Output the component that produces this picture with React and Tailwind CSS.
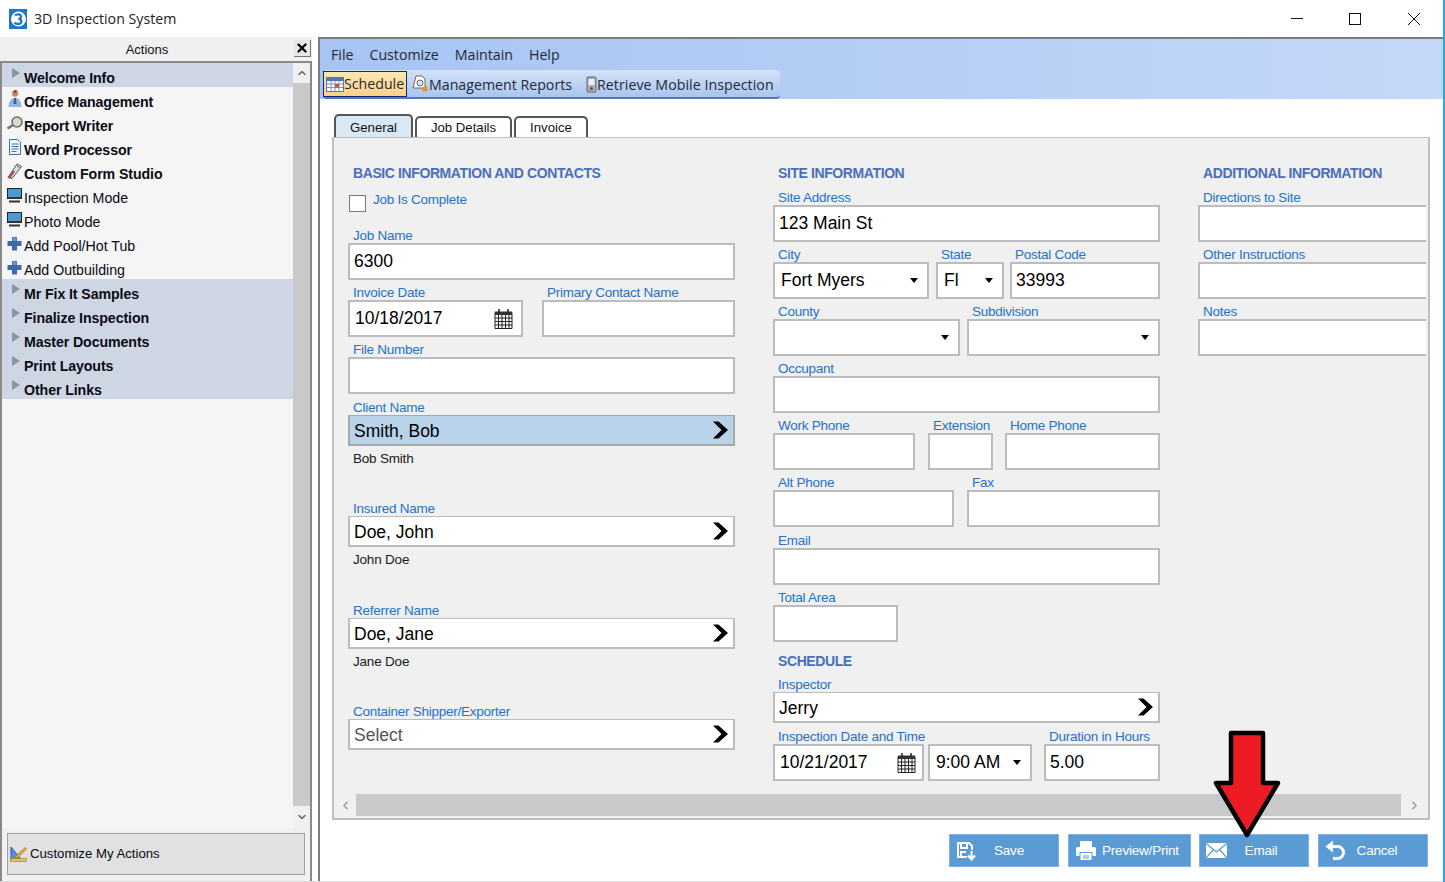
import { X, ChevronUp, ChevronDown, ChevronLeft, ChevronRight } from "lucide-react";

const sans = "font-['Liberation_Sans',Arial,sans-serif]";

function Tri() {
  return (
    <svg width="10" height="12" viewBox="0 0 10 12" className="mb-1">
      <path d="M1 1 L9 6 L1 11 Z" fill="#8a92a8" />
    </svg>
  );
}

function Person() {
  return (
    <svg width="16" height="20" viewBox="0 0 16 20">
      <circle cx="8" cy="4.5" r="3.2" fill="#c98b5a" />
      <path d="M7 1h3l-1 3H7z" fill="#6b5a4a" />
      <path d="M1.5 18c0-6 3-9 6.5-9s6.5 3 6.500 9z" fill="#8fb8e0" />
      <path d="M7 9h2l.5 6H6.500z" fill="#3f5f8f" />
    </svg>
  );
}

function Lens() {
  return (
    <svg width="18" height="14" viewBox="0 0 18 14">
      <circle cx="11" cy="6" r="5" fill="#d8d8d0" stroke="#6f6f68" strokeWidth="1.6" />
      <path d="M7 9 L1.5 12.5" stroke="#77736a" strokeWidth="2.4" />
    </svg>
  );
}

function Doc() {
  return (
    <svg width="14" height="16" viewBox="0 0 14 16">
      <path d="M1.5 .5h8l3 3v12h-11z" fill="#eef4fc" stroke="#3f6fb5" />
      <path d="M3.5 5h7M3.5 7.5h7M3.5 10h7M3.5 12.5h5" stroke="#3f6fb5" />
    </svg>
  );
}

function Tools() {
  return (
    <svg width="17" height="17" viewBox="0 0 17 17">
      <path d="M11 1 L15.5 3.5 L6 15.5 L2 14.5 Z" fill="#d9dde4" stroke="#555" />
      <path d="M3 15 L8 8" stroke="#b04a50" strokeWidth="2.4" />
      <path d="M11 3 L13.5 4.5" stroke="#555" />
    </svg>
  );
}

function Monitor() {
  return (
    <svg width="15" height="15" viewBox="0 0 15 15">
      <rect x=".5" y=".5" width="14" height="10" fill="#4a9ad8" stroke="#222" />
      <path d="M1 9h13v2H1z" fill="#333" />
      <path d="M2 12.500h11v2H2z" fill="#333" />
    </svg>
  );
}

function Plus() {
  return (
    <svg width="15" height="15" viewBox="0 0 15 15">
      <path d="M5 1h5v4h4.500v5H10v4.500H5V10H.5V5H5z" fill="#3f68ad" />
      <path d="M5.500 1.500h4v3.500H5.500z" fill="#6d93cf" />
    </svg>
  );
}

function Ruler() {
  return (
    <svg width="17" height="16" viewBox="0 0 17 16">
      <path d="M1 1 L1 13 L11 13 Z" fill="#5a8fdc" stroke="#2f5fae" />
      <path d="M6 10 L15 1.500 L16.500 3 L8 11.500 L5 12.500 Z" fill="#e8a63a" stroke="#96641c" strokeWidth=".6" />
      <rect x="0.500" y="12.500" width="16" height="3" fill="#e6c560" stroke="#97782a" strokeWidth=".6" />
    </svg>
  );
}

function Logo() {
  return (
    <svg width="18" height="20" viewBox="0 0 18 20">
      <rect width="18" height="20" fill="#1f78c4" />
      <circle cx="9.500" cy="10" r="7.500" fill="#fff" />
      <path d="M6 6.500c1-1.500 6-1.800 6 1.200 0 1.400-1.300 2-2.600 2.200 1.600.1 3 .9 3 2.500 0 3-5.200 3-7 1.200" fill="none" stroke="#1f78c4" strokeWidth="2.200" />
    </svg>
  );
}

function ScheduleIcon() {
  return (
    <svg width="18" height="15" viewBox="0 0 18 15" className="shrink-0">
      <rect x=".5" y=".5" width="17" height="14" fill="#fff" stroke="#5574b8" />
      <rect x="1" y="1" width="16" height="3" fill="#5574b8" />
      <path d="M1 7h16M1 10.500h16M5 4v10M9 4v10M13 4v10" stroke="#7f95c8" />
      <rect x="9" y="7" width="4" height="3.500" fill="#d9483b" />
    </svg>
  );
}

function ReportIcon() {
  return (
    <svg width="17" height="18" viewBox="0 0 17 18" className="shrink-0">
      <path d="M4 1h6l3 3v9H1z" fill="#fff" stroke="#666" />
      <circle cx="8" cy="8" r="3" fill="#dfe4ea" stroke="#666" />
      <circle cx="13" cy="14" r="2.800" fill="#e0913a" />
    </svg>
  );
}

function MobileIcon() {
  return (
    <svg width="11" height="17" viewBox="0 0 11 17" className="shrink-0">
      <rect x="1" y="1" width="9" height="15" rx="1" fill="#a9adb3" stroke="#666" />
      <rect x="2.500" y="3" width="6" height="6" fill="#e9eef5" />
      <circle cx="5.500" cy="12.500" r="1.500" fill="#555" />
    </svg>
  );
}

function CalendarIcon() {
  return (
    <svg width="19" height="20" viewBox="0 0 19 20">
      <path d="M1 3.500h17v16H1z" fill="#fff" stroke="#222" />
      <path d="M1 2.500h17v3.500H1z" fill="#333" />
      <path d="M5 0v4M14 0v4" stroke="#222" strokeWidth="1.500" />
      <path d="M1 9h17M1 12.500h17M1 16h17M4.500 6v13M8 6v13M11.500 6v13M15 6v13" stroke="#222" />
    </svg>
  );
}

function MenuChevron() {
  return (
    <svg width="17" height="18" viewBox="0 0 17 18" className="shrink-0">
      <path d="M1 .5h5.500L16 9l-9.500 8.500H1L9.500 9z" fill="#000" />
    </svg>
  );
}

function SaveIcon() {
  return (
    <svg width="21" height="20" viewBox="0 0 21 20" fill="none" stroke="#fff" strokeWidth="2">
      <path d="M11 16H2V2h11l3 3v4" />
      <path d="M5 2v5h6V2M5 16v-5h5" />
      <path d="M15.500 10v8M12 14.500l3.500 4 3.500-4" strokeWidth="2.200" />
    </svg>
  );
}

function PrinterIcon() {
  return (
    <svg width="22" height="21" viewBox="0 0 22 21" fill="#fff">
      <path d="M5 1h12v6H5z" />
      <path d="M1 8.500a1.500 1.500 0 0 1 1.500-1.500h17A1.500 1.500 0 0 1 21 8.500V16h-3.500v-4h-13v4H1z" />
      <path d="M5.500 13h11v7h-11z" />
      <path d="M8 16h6M8 18h6" stroke="#5b9bd5" />
    </svg>
  );
}

function MailIcon() {
  return (
    <svg width="21" height="15" viewBox="0 0 21 15">
      <path d="M0 0h21v15H0z" fill="#fff" />
      <path d="M0 .5 L10.500 9 L21 .5M0 15 L7.500 6.500M21 15 L13.500 6.500" fill="none" stroke="#5b9bd5" strokeWidth="1.300" />
    </svg>
  );
}

function UndoIcon() {
  return (
    <svg width="21" height="21" viewBox="0 0 21 21" fill="none">
      <path d="M6 6.500h6.500a6 6 0 0 1 0 12H8" stroke="#fff" strokeWidth="3" />
      <path d="M0.500 6.500 L8 0.500 V12.500 Z" fill="#fff" />
    </svg>
  );
}

function WinControls() {
  return (
    <div className="ml-auto flex items-center pr-[23px]">
      <svg width="12" height="12" viewBox="0 0 12 12" fill="none" stroke="#111">
        <path d="M0 5.500h12" />
      </svg>
      <svg width="12" height="12" viewBox="0 0 12 12" fill="none" stroke="#111" className="ml-[46px]">
        <rect x=".5" y=".5" width="11" height="11" />
      </svg>
      <svg width="12" height="12" viewBox="0 0 12 12" fill="none" stroke="#111" className="ml-[47px]">
        <path d="M0 0 L12 12 M12 0 L0 12" />
      </svg>
    </div>
  );
}

function RedArrow() {
  return (
    <svg width="70" height="108" viewBox="0 0 70 108" className="absolute left-[1212px] top-[730px]">
      <path d="M19 3 H51 V53 H66 L35 105 L4 53 H19 Z" fill="#ed1c24" stroke="#000" strokeWidth="4.500" strokeLinejoin="round" />
    </svg>
  );
}

const actions = [
  { label: "Welcome Info", bold: true, band: true },
  { label: "Office Management", bold: true, icon: <Person /> },
  { label: "Report Writer", bold: true, icon: <Lens /> },
  { label: "Word Processor", bold: true, icon: <Doc /> },
  { label: "Custom Form Studio", bold: true, icon: <Tools /> },
  { label: "Inspection Mode", icon: <Monitor /> },
  { label: "Photo Mode", icon: <Monitor /> },
  { label: "Add Pool/Hot Tub", icon: <Plus /> },
  { label: "Add Outbuilding", icon: <Plus /> },
  { label: "Mr Fix It Samples", bold: true, band: true },
  { label: "Finalize Inspection", bold: true, band: true },
  { label: "Master Documents", bold: true, band: true },
  { label: "Print Layouts", bold: true, band: true },
  { label: "Other Links", bold: true, band: true },
];

function Sidebar() {
  return (
    <aside className="w-[312px] shrink-0 flex flex-col bg-[#f0f0f0]">
      <div className="h-[24px] shrink-0 flex items-center relative">
        <span className="w-[294px] text-center text-[13px] text-[#111] pt-0.5">Actions</span>
        <button className="absolute right-[1px] top-[3px] w-[17px] h-[17px] bg-[#e8e8e0] border-r border-b border-[#777] flex items-center justify-center">
          <X size={14} strokeWidth={4} color="#000" />
        </button>
      </div>
      <div className="flex-1 flex flex-col border-2 border-[#8a8a8a] border-b-0 bg-[#f5f5f5] min-h-0">
        <div className="flex-1 flex min-h-0">
          <ul className="flex-1">
            {actions.map((a) => (
              <li key={a.label} className={`h-[24px] flex items-center ${a.band ? "bg-[#cfd6e3]" : ""}`}>
                <span className={`w-[22px] shrink-0 flex items-center justify-center ${a.band ? "pl-[5px]" : "pl-[3px]"}`}>
                  {a.band ? <Tri /> : a.icon}
                </span>
                <span className={`pt-[8px] text-[14.2px] text-[#0a0a14] ${a.bold ? "font-bold tracking-[-0.1px]" : ""}`}>{a.label}</span>
              </li>
            ))}
          </ul>
          <div className="w-[17px] shrink-0 flex flex-col bg-[#f0f0f0]">
            <div className="h-[20px] flex items-center justify-center">
              <ChevronUp size={12} strokeWidth={3} color="#666" />
            </div>
            <div className="flex-1 bg-[#c9c9c9]" />
            <div className="h-[22px] flex items-center justify-center">
              <ChevronDown size={12} strokeWidth={3} color="#666" />
            </div>
          </div>
        </div>
        <div className="h-[53px] shrink-0 pt-[5px] px-[5px] bg-[#f0f0f0]">
          <button className="w-[298px] h-[42px] bg-[#e1e1e1] border border-[#a0a0a0] flex items-center pl-[2px] gap-[3px] text-[13.2px] text-[#0a0a14]">
            <Ruler />
            Customize My Actions
          </button>
        </div>
      </div>
    </aside>
  );
}

const labelClass = "h-[20px] pl-[5px] text-[13.5px] leading-[20px] pt-[3px] text-[#2472c8] tracking-[-0.25px] whitespace-nowrap";

function Field({ label, width, value, children }) {
  return (
    <div className={`${width} shrink-0`}>
      <div className={labelClass}>{label}</div>
      <div className="h-[37px] border-2 border-[#bcbcbc] bg-white flex items-center pl-[4px] text-[17.5px] text-black">
        {value}
        {children}
      </div>
    </div>
  );
}

function Combo({ label, width, value }) {
  return (
    <Field label={label} width={width} value={<span className="flex-1 pl-[2px]">{value}</span>}>
      <span className="w-0 h-0 mr-[9px] border-x-[4px] border-x-transparent border-t-[5px] border-t-black" />
    </Field>
  );
}

function Picker({ label, value, sub, active, muted, className = "" }) {
  return (
    <div className={`w-[387px] shrink-0 ${className}`}>
      <div className={labelClass}>{label}</div>
      <div className={`h-[31px] border-2 border-t flex items-center pl-[4px] pr-[4px] text-[17.5px] ${active ? "bg-[#b8d2ea] border-[#a8a8a8]" : "bg-white border-[#bcbcbc]"} ${muted ? "text-[#555]" : "text-black"}`}>
        <span className="flex-1 pt-[3px]">{value}</span>
        <MenuChevron />
      </div>
      {sub !== undefined && <div className="h-[50px] pl-[5px] pt-[3px] text-[13.5px] tracking-[-0.2px] text-[#1a1a1a]">{sub}</div>}
    </div>
  );
}

function Heading({ children, className = "" }) {
  return <h2 className={`text-[14px] h-[20px] shrink-0 leading-[20px] pl-[5px] font-bold text-[#4a6fb8] tracking-[-0.4px] whitespace-nowrap ${className}`}>{children}</h2>;
}

function BasicColumn() {
  return (
    <div className="w-[387px] shrink-0 flex flex-col">
      <Heading>BASIC INFORMATION AND CONTACTS</Heading>
      <div className="h-[40px] shrink-0 flex items-start pt-[12px] pl-px gap-[7px]">
        <span className="w-[17px] h-[17px] border border-[#777] bg-white" />
        <span className="text-[13.5px] text-[#2472c8] tracking-[-0.25px] -mt-[5px]">Job Is Complete</span>
      </div>
      <Field label="Job Name" width="w-[387px]" value="6300" />
      <div className="flex gap-[19px]">
        <Field label="Invoice Date" width="w-[175px]" value={<span className="flex-1 pl-px">10/18/2017</span>}>
          <span className="mr-[8px] flex"><CalendarIcon /></span>
        </Field>
        <Field label="Primary Contact Name" width="w-[193px]" />
      </div>
      <Field label="File Number" width="w-[387px]" />
      <Picker label="Client Name" value="Smith, Bob" sub="Bob Smith" active className="mt-px" />
      <Picker label="Insured Name" value="Doe, John" sub="John Doe" />
      <Picker label="Referrer Name" value="Doe, Jane" sub="Jane Doe" className="mt-px" />
      <Picker label="Container Shipper/Exporter" value="Select" muted />
    </div>
  );
}

function SiteColumn() {
  return (
    <div className="w-[387px] shrink-0 flex flex-col">
      <Heading className="mb-[2px]">SITE INFORMATION</Heading>
      <Field label="Site Address" width="w-[387px]" value="123 Main St" />
      <div className="flex gap-[7px]">
        <Combo label="City" width="w-[156px]" value="Fort Myers" />
        <Combo label="State" width="w-[68px]" value="Fl" />
        <Field label="Postal Code" width="w-[150px] -ml-px" value="33993" />
      </div>
      <div className="flex gap-[7px]">
        <Combo label="County" width="w-[187px]" value="" />
        <Combo label="Subdivision" width="w-[193px]" value="" />
      </div>
      <Field label="Occupant" width="w-[387px]" />
      <div className="flex gap-[13px]">
        <Field label="Work Phone" width="w-[142px]" />
        <Field label="Extension" width="w-[65px]" />
        <Field label="Home Phone" width="w-[155px] -ml-px" />
      </div>
      <div className="flex gap-[13px]">
        <Field label="Alt Phone" width="w-[181px]" />
        <Field label="Fax" width="w-[193px]" />
      </div>
      <Field label="Email" width="w-[387px] mt-px" />
      <Field label="Total Area" width="w-[125px]" />
      <Heading className="mt-[9px] mb-px">SCHEDULE</Heading>
      <Picker label="Inspector" value="Jerry" />
      <div className="flex mt-px">
        <Field label="Inspection Date and Time" width="w-[151px]" value={<span className="flex-1 pl-px">10/21/2017</span>}>
          <span className="mr-[6px] flex"><CalendarIcon /></span>
        </Field>
        <div className="w-[4px]" />
        <Combo label="" width="w-[104px]" value="9:00 AM" />
        <div className="w-[12px]" />
        <Field label="Duration in Hours" width="w-[116px]" value="5.00" />
      </div>
    </div>
  );
}

function ExtraColumn() {
  return (
    <div className="w-[240px] shrink-0 flex flex-col">
      <Heading className="mb-[2px]">ADDITIONAL INFORMATION</Heading>
      <Field label="Directions to Site" width="w-[240px]" />
      <Field label="Other Instructions" width="w-[240px]" />
      <Field label="Notes" width="w-[240px]" />
    </div>
  );
}

function Tab({ label, active, width }) {
  return (
    <div className={`${width} rounded-t-[5px] border-2 border-b-0 text-center text-[13.2px] border-[#555] text-[#111] ${active ? "h-[23px] bg-[#d9e8f5] leading-[23px]" : "h-[21px] bg-white leading-[20px]"}`}>
      {label}
    </div>
  );
}

function ActionButton({ label, icon, width, textClass }) {
  return (
    <button className={`${width} h-[33px] bg-[#5b9bd5] border border-[#7fb2e0] flex items-center text-[13.500px] text-white tracking-[-0.2px]`}>
      <span className="w-[36px] pl-[6px] shrink-0 flex">{icon}</span>
      <span className={`flex-1 text-center pt-px ${textClass}`}>{label}</span>
    </button>
  );
}

function Main() {
  return (
    <main className="flex-1 min-w-0 flex flex-col ml-[6px] border-l-2 border-t-2 border-[#7c7c7c] bg-white">
      <div className="h-[60px] shrink-0 bg-gradient-to-r from-[#a7c4f2] to-[#c4d8f8] flex flex-col justify-end pl-[3px]">
        <nav className="h-[31px] flex items-center gap-[16px] pl-[8px] text-[14.2px] font-['Open_Sans',sans-serif] text-[#1e2a3a]">
          <span>File</span>
          <span>Customize</span>
          <span>Maintain</span>
          <span>Help</span>
        </nav>
        <div className="h-[29px] w-[457px] flex items-center rounded-sm bg-gradient-to-b from-[#d3e2f8] to-[#a9c5ee] border-b-2 border-[#5177c0] text-[14.2px] font-['Open_Sans',sans-serif] text-[#1e2a3a] whitespace-nowrap">
          <span className="h-[26px] w-[84px] border border-[#0a2a78] bg-gradient-to-b from-[#ffe6b5] to-[#fdd08a] flex items-center pl-[2px] pt-px">
            <ScheduleIcon />Schedule
          </span>
          <span className="flex items-center pl-[5px] pt-[2px]">
            <ReportIcon />Management Reports
          </span>
          <span className="flex items-center pl-[14px] pt-[2px] tracking-[0.05px]">
            <MobileIcon />Retrieve Mobile Inspection
          </span>
        </div>
      </div>

      <div className="flex-1 flex flex-col min-h-0 px-[12px]">
        <div className="h-[38px] shrink-0 flex items-end pl-[2px] gap-[2px]">
          <Tab label="General" active width="w-[79px]" />
          <Tab label="Job Details" width="w-[97px]" />
          <Tab label="Invoice" width="w-[74px]" />
        </div>
        <div className="w-[1098px] h-[683px] shrink-0 border-2 border-[#c0c0c0] border-t bg-[#f0f0f0] flex flex-col overflow-hidden">
          <div className="flex-1 min-h-0 flex pl-[14px] mr-[2px] pt-[25px] gap-[38px] overflow-hidden">
            <BasicColumn />
            <SiteColumn />
            <ExtraColumn />
          </div>
          <div className="h-[22px] shrink-0 flex items-center bg-[#f0f0f0] mb-[2px]">
            <span className="w-[22px] flex justify-center"><ChevronLeft size={13} strokeWidth={2.500} color="#999" /></span>
            <div className="w-[1045px] h-full bg-[#c9c9c9]" />
            <span className="flex-1 flex justify-center"><ChevronRight size={13} strokeWidth={2.500} color="#999" /></span>
          </div>
        </div>
        <div className="flex-1 flex justify-end gap-[9px] pt-[14px] pr-[3px]">
          <ActionButton label="Save" width="w-[110px]" textClass="pr-[26px]" icon={<SaveIcon />} />
          <ActionButton label="Preview/Print" width="w-[123px]" textClass="-ml-[3px] pr-[14px]" icon={<PrinterIcon />} />
          <ActionButton label="Email" width="w-[110px] -ml-px" textClass="pr-[22px]" icon={<MailIcon />} />
          <ActionButton label="Cancel" width="w-[110px]" textClass="pr-[28px]" icon={<UndoIcon />} />
        </div>
      </div>
    </main>
  );
}

export default function App() {
  return (
    <div className={`relative w-[1445px] h-[882px] overflow-hidden bg-white flex flex-col border-r-2 border-[#29a8e0] ${sans}`}>
      <header className="h-[37px] shrink-0 flex items-center pl-[9px]">
        <Logo />
        <span className="ml-[7px] text-[14.2px] font-['Open_Sans',sans-serif] text-[#222]">3D Inspection System</span>
        <WinControls />
      </header>
      <div className="flex-1 flex min-h-0 border-b border-[#ddd]">
        <Sidebar />
        <Main />
      </div>
      <RedArrow />
    </div>
  );
}
